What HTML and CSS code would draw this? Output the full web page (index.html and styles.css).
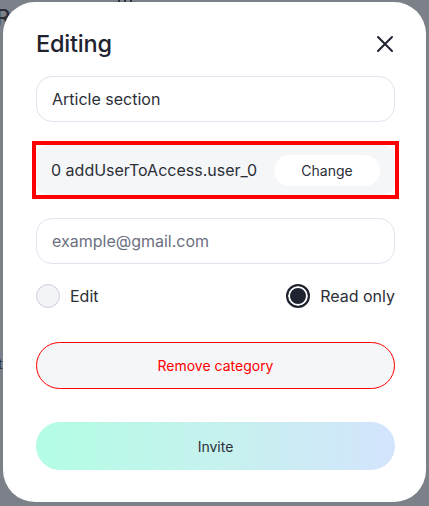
FILE: index.html
```html
<!DOCTYPE html>
<html>
<head>
<meta charset="utf-8">
<link rel="stylesheet" href="styles.css">
</head>
<body>
<div class="backdrop">
  <div class="bg-text">Re</div>
  <div class="bg-bars"><span></span><span></span><span></span></div>
  <div class="bg-t">t</div>
  <div class="modal">
    <div class="header">
      <h1 class="title">Editing</h1>
      <button class="close" aria-label="Close">
        <svg width="18" height="18" viewBox="0 0 18 18"><path d="M2 2 L16 16 M16 2 L2 16" stroke="#1f2330" stroke-width="2" stroke-linecap="round" fill="none"/></svg>
      </button>
    </div>
    <div class="field">Article section</div>
    <div class="highlight">
      <div class="user-box">
        <span class="user-name">0 addUserToAccess.user_0</span>
        <button class="change">Change</button>
      </div>
    </div>
    <div class="field placeholder">example@gmail.com</div>
    <div class="radios">
      <label class="radio"><span class="dot"></span>Edit</label>
      <label class="radio"><span class="dot checked"></span>Read only</label>
    </div>
    <button class="remove">Remove category</button>
    <button class="invite">Invite</button>
  </div>
</div>
</body>
</html>
```
FILE: styles.css
```css
* { box-sizing: border-box; }
html, body { margin: 0; padding: 0; }
body {
  font-family: Inter, "Noto Sans", "Liberation Sans", sans-serif;
  background: #7c8089;
  width: 429px;
  height: 506px;
  overflow: hidden;
}
.backdrop {
  position: relative;
  width: 429px;
  height: 506px;
  padding: 2px 3px 0 3px;
}
.bg-text {
  position: absolute;
  left: -4px;
  top: 4px;
  font-size: 22px;
  color: #2a2e36;
  font-weight: 500;
}
.bg-bars {
  position: absolute;
  left: 118px;
  top: -6px;
  display: flex;
  gap: 4px;
}
.bg-bars span {
  width: 2px;
  height: 8px;
  background: #2a2e36;
}
.bg-t {
  position: absolute;
  left: -2px;
  top: 355px;
  font-size: 14px;
  color: #2a2e36;
}
.modal {
  position: relative;
  width: 423px;
  height: 500px;
  background: #fff;
  border-radius: 32px;
  padding: 28px 31px 0 33px;
  display: flex;
  flex-direction: column;
}
.header {
  display: flex;
  align-items: center;
  justify-content: space-between;
  height: 28px;
  margin-bottom: 18px;
}
.title {
  margin: 0;
  font-size: 23.5px;
  font-weight: 500;
  color: #1f2330;
  line-height: 28px;
  letter-spacing: -0.2px;
}
.close {
  background: none;
  border: 0;
  padding: 0;
  width: 18px;
  height: 18px;
  margin-right: 1px;
  display: flex;
}
.field {
  height: 46px;
  border: 1px solid #e3e2ee;
  border-radius: 16px;
  padding: 0 15px;
  display: flex;
  align-items: center;
  font-size: 16px;
  color: #2b2f38;
}
.field.placeholder { color: #6b7080; margin-top: 19px; }
.highlight {
  margin: 19px -4px 0 -4px;
  border: 4px solid #ff0000;
}
.user-box {
  height: 50px;
  background: #f5f6f8;
  border-radius: 12px;
  display: flex;
  align-items: center;
  justify-content: space-between;
  padding: 0 15px;
  font-size: 16px;
  color: #2b2f38;
}
.change {
  width: 106px;
  height: 31px;
  border: 0;
  background: #fff;
  border-radius: 16px;
  font-family: inherit;
  font-size: 14px;
  color: #2b2f38;
}
.radios {
  margin-top: 20px;
  height: 24px;
  display: flex;
  justify-content: space-between;
  align-items: center;
}
.radio {
  display: flex;
  align-items: center;
  gap: 10px;
  font-size: 16px;
  color: #2b2f38;
}
.dot {
  width: 24px;
  height: 24px;
  border-radius: 50%;
  background: #f3f4f7;
  border: 1.5px solid #d0d2d8;
}
.dot.checked {
  background: #1f2330;
  border: 2px solid #1f2330;
  box-shadow: inset 0 0 0 2px #fff;
}
.remove {
  margin-top: 34px;
  height: 47px;
  border: 1px solid #ff0000;
  background: #f5f6f8;
  border-radius: 24px;
  font-family: inherit;
  font-size: 14px;
  color: #ff0000;
}
.invite {
  margin-top: 33px;
  height: 48px;
  border: 0;
  border-radius: 24px;
  background: linear-gradient(90deg, #b3fde5 0%, #c6f2ee 50%, #d3e4fd 100%);
  font-family: inherit;
  font-size: 14px;
  color: #2b2f38;
}
```
